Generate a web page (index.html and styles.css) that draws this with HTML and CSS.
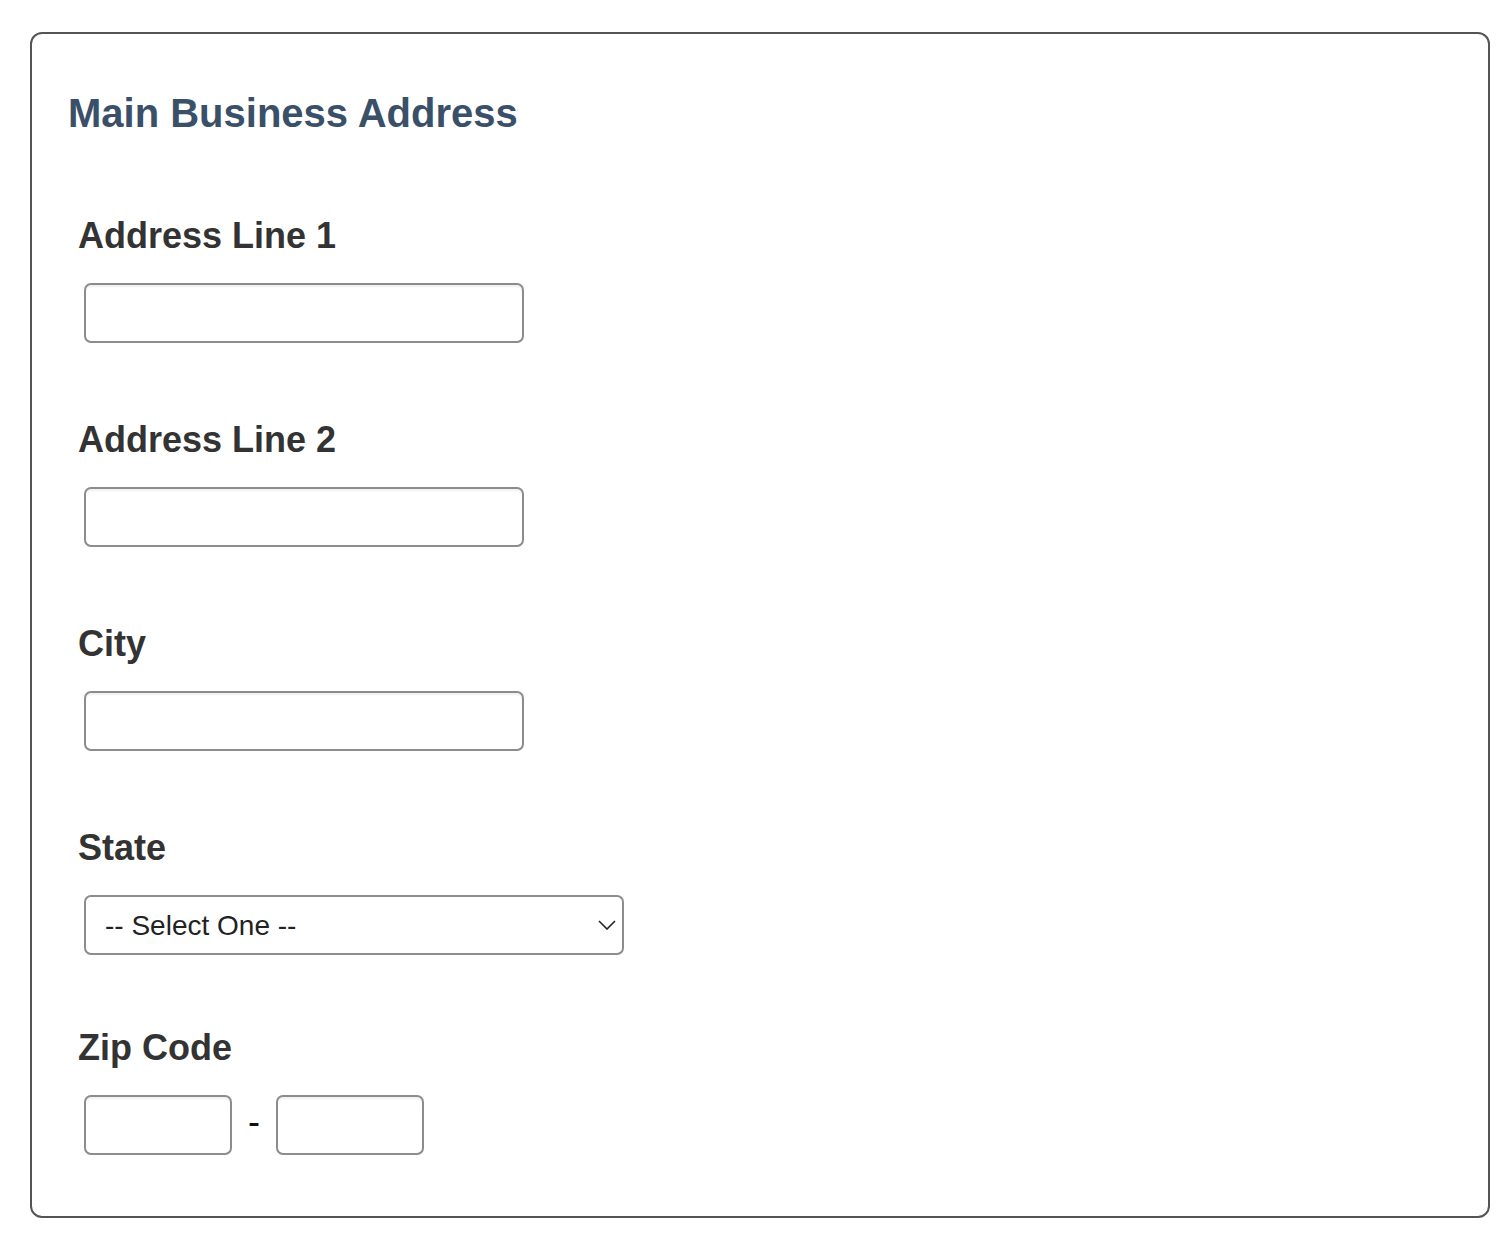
FILE: index.html
```html
<!DOCTYPE html>
<html lang="en">
<head>
  <meta charset="UTF-8">
  <title>Main Business Address</title>
  <link rel="stylesheet" href="styles.css">
</head>
<body>
  <fieldset class="panel">
    <h2 class="panel-title">Main Business Address</h2>

    <div class="field">
      <label for="addr1">Address Line 1</label>
      <input id="addr1" type="text" class="text-input">
    </div>

    <div class="field">
      <label for="addr2">Address Line 2</label>
      <input id="addr2" type="text" class="text-input">
    </div>

    <div class="field">
      <label for="city">City</label>
      <input id="city" type="text" class="text-input">
    </div>

    <div class="field">
      <label for="state">State</label>
      <div class="select-wrap">
        <select id="state" class="select-input">
          <option>-- Select One --</option>
        </select>
        <svg class="chevron" width="18" height="10" viewBox="0 0 18 10">
          <path d="M1 1 L9 9 L17 1" fill="none" stroke="#222" stroke-width="1.6"/>
        </svg>
      </div>
    </div>

    <div class="field field-zip">
      <label for="zip">Zip Code</label>
      <div class="zip-row">
        <input id="zip" type="text" class="zip-input">
        <span class="zip-dash">-</span>
        <input id="zip4" type="text" class="zip-input">
      </div>
    </div>
  </fieldset>
</body>
</html>
```

FILE: styles.css
```css
body {
  margin: 0;
  background-color: #ffffff;
  font-family: "Liberation Sans", Arial, sans-serif;
  color: #333333;
}

.panel {
  margin: 32px 0 0 30px;
  width: 1460px;
  box-sizing: border-box;
  border: 2px solid #555555;
  border-radius: 12px;
  padding: 56px 36px 61px 36px;
  min-width: 0;
}

.panel-title {
  margin: 0;
  font-size: 40px;
  line-height: 46px;
  font-weight: bold;
  color: #3a5069;
}

.field {
  margin-top: 80px;
  padding-left: 10px;
}

.field + .field {
  margin-top: 77px;
}

.field + .field-zip {
  margin-top: 73px;
}

.field label {
  display: block;
  font-size: 36px;
  line-height: 40px;
  font-weight: bold;
  color: #333333;
  margin-bottom: 27px;
}

.text-input,
.select-input,
.zip-input {
  box-sizing: border-box;
  height: 60px;
  margin: 0 0 0 6px;
  border: 2px solid #8c8c8c;
  border-radius: 7px;
  background-color: #ffffff;
  font-family: "Liberation Sans", Arial, sans-serif;
  display: block;
}

.text-input {
  width: 440px;
  box-shadow: inset 0 2px 2px rgba(0, 0, 0, 0.06);
}

.select-wrap {
  position: relative;
  width: 540px;
  margin-left: 6px;
}

.select-input {
  width: 540px;
  margin: 0;
  appearance: none;
  -webkit-appearance: none;
  padding: 0 40px 0 19px;
  font-size: 28px;
  color: #222222;
}

.chevron {
  position: absolute;
  right: 8px;
  top: 25px;
  pointer-events: none;
}

.zip-row {
  display: flex;
  align-items: center;
  margin-left: 6px;
}

.zip-input {
  width: 148px;
  margin: 0;
  box-shadow: inset 0 2px 2px rgba(0, 0, 0, 0.06);
}

.zip-dash {
  font-size: 36px;
  color: #111111;
  width: 44px;
  text-align: center;
  line-height: 40px;
  margin-top: -6px;
}
```
